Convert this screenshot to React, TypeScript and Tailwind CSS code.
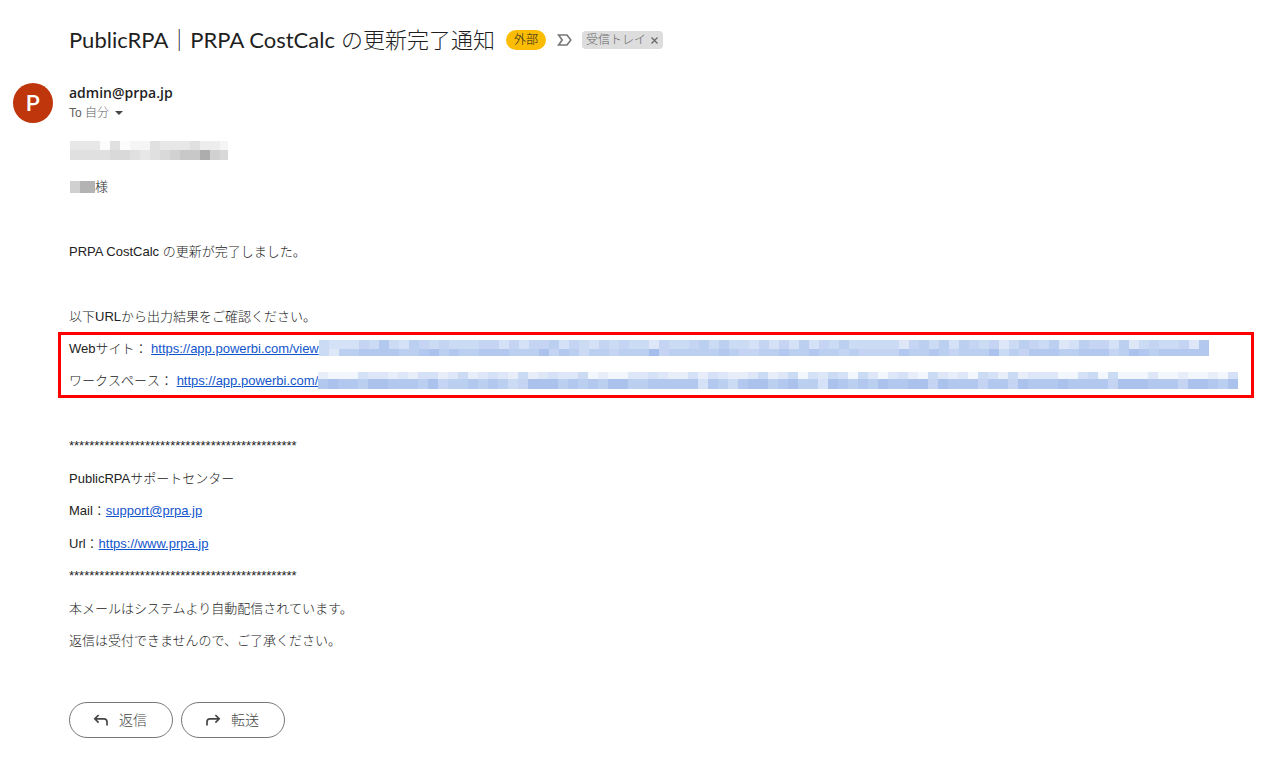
import React from "react"

type MosaicProps = {
  rows: string[]
  heights: number[]
  width: number
  palette: string[]
  label: string
}

const BLUES = ["#f2f6fd", "#e7eefa", "#dde7f8", "#d5e1f6", "#ccdbf4", "#c4d4f2", "#bbcff0", "#b3c8ef", "#abc2ed", "#a6beeb"]
const GRAYS = ["#fcfcfc", "#f5f5f5", "#ededed", "#e7e7e7", "#e0e0e0", "#d9d9d9", "#d1d1d1", "#c8c8c8", "#b4b4b4", "#adadad"]

const CELL = 10

// Pixelated strip, one digit per cell (index into the palette)
const Mosaic = ({ rows, heights, width, palette, label }: MosaicProps) => {
  const height = heights[0] + heights[1]
  return (
    <svg
      width={width}
      height={height}
      viewBox={`0 0 ${width} ${height}`}
      shapeRendering="crispEdges"
      className="shrink-0"
      role="img"
      aria-label={label}
    >
      {rows.map((row, r) =>
        row
          .split("")
          .map((cell, i) => (
            <rect
              key={`${r}-${i}`}
              x={i * CELL}
              y={r === 0 ? 0 : heights[0]}
              width={CELL}
              height={heights[r]}
              fill={palette[Number(cell)]}
            />
          ))
      )}
    </svg>
  )
}

const siteRows = [
  "43335474365454445535355635435454425445646443535363546444442564636545246546236553624544527",
  "42667777667867667776668576466566695666667655667667665655557667656668465777667775687677777",
]

const workspaceRows = [
  "10003221213312412321412322401002232113132112412403243042023104212043141222003404000200100103",
  "78776887776856676764588867676886677777376478867866387676877885877757758777877775888777588768",
]

const linkClass = "text-[#1155cc] underline"
const STARS = "*".repeat(45)

const Title = () => (
  <header className="flex items-center pl-[69px] pr-4 pt-6">
    <h1 className="font-['Lato','Noto_Sans_CJK_JP',sans-serif] text-[22px] leading-8 font-light text-[#1f1f1f]">
      <span className="font-normal">PublicRPA</span>｜<span className="font-normal">PRPA CostCalc</span> の更新完了通知
    </h1>
    <span className="ml-[11px] shrink-0 rounded-full bg-[#fbbc04] px-2 text-xs leading-5 text-[#202124]">外部</span>
    <button type="button" aria-label="重要マーク" className="ml-[11px] shrink-0">
      <svg width="15" height="12" viewBox="0 0 15 12" fill="none" stroke="#747775" strokeWidth="1.6">
        <path d="M1.6 1H10l3.8 5L10 11H1.6L5.2 6z" />
      </svg>
    </button>
    <span className="ml-[10px] flex h-[18px] shrink-0 items-center rounded bg-[#ddd] px-1 text-xs text-[#666]">
      受信トレイ
      <button type="button" aria-label="ラベルを削除" className="ml-1 flex w-[9px] justify-center">
        <svg width="7" height="7" viewBox="0 0 7 7" stroke="#666" strokeWidth="1.2">
          <path d="M.5.5l6 6M6.5.5l-6 6" />
        </svg>
      </button>
    </span>
  </header>
)

const Sender = () => (
  <div className="mt-[27px] flex items-start gap-4 pl-[13px]">
    <div className="flex size-10 shrink-0 items-center justify-center rounded-full bg-[#bf360c] font-[Roboto,sans-serif] text-[22px] font-medium text-white">
      P
    </div>
    <div>
      <div className="font-['Open_Sans',sans-serif] text-sm leading-5 font-semibold text-[#1f1f1f]">admin@prpa.jp</div>
      <button type="button" className="flex items-center text-xs leading-5 text-[#5e5e5e]">
        To 自分
        <svg width="8" height="4" viewBox="0 0 8 4" className="ml-[6px]" fill="#444746">
          <path d="M0 0h8L4 4z" />
        </svg>
      </button>
    </div>
  </div>
)

const Body = () => (
  <div className="mt-[18px] ml-[58px] mr-[29px] flex flex-col gap-[13px] text-[13px] leading-normal text-[#222]">
    <div className="h-[23px] pl-3">
      <Mosaic rows={["3330401143334221", "4444554345677965"]} heights={[9, 10]} width={158} palette={GRAYS} label="会社名" />
    </div>
    <p className="flex items-center pl-3">
      <svg width="25" height="12" viewBox="0 0 25 12" shapeRendering="crispEdges" role="img" aria-label="氏名">
        <path fill="#d0d0d0" d="M0 0h10v12H0z" />
        <path fill="#b3b3b3" d="M10 0h15v12H10z" />
      </svg>
      様
    </p>
    <p>&nbsp;</p>
    <p className="px-[11px]">PRPA CostCalc の更新が完了しました。</p>
    <p>&nbsp;</p>
    <p className="px-[11px]">以下URLから出力結果をご確認ください。</p>

    <div className="-mt-2 -mb-[7px] flex flex-col gap-[13px] overflow-hidden border-3 border-[#ff0000] px-2 py-1 whitespace-nowrap">
      <p className="flex items-center">
        <span>Webサイト：&nbsp;</span>
        <a href="https://app.powerbi.com/view" className={linkClass}>
          https://app.powerbi.com/view
        </a>
        <Mosaic rows={siteRows} heights={[9, 7]} width={890} palette={BLUES} label="URLの続き" />
      </p>
      <p className="flex items-center">
        <span className="[font-kerning:none]">ワークスペース：&nbsp;</span>
        <a href="https://app.powerbi.com/" className={linkClass}>
          https://app.powerbi.com/
        </a>
        <Mosaic rows={workspaceRows} heights={[7, 10]} width={920} palette={BLUES} label="URLの続き" />
      </p>
    </div>

    <p>&nbsp;</p>
    <p className="px-[11px]">{STARS}</p>
    <p className="px-[11px]">PublicRPAサポートセンター</p>
    <p className="px-[11px]">
      Mail：
      <a href="mailto:support@prpa.jp" className={linkClass}>
        support@prpa.jp
      </a>
    </p>
    <p className="px-[11px]">
      Url：
      <a href="https://www.prpa.jp" className={linkClass}>
        https://www.prpa.jp
      </a>
    </p>
    <p className="px-[11px]">{STARS}</p>
    <p className="px-[11px]">本メールはシステムより自動配信されています。</p>
    <p className="px-[11px]">返信は受付できませんので、ご了承ください。</p>
  </div>
)

const actionClass =
  "flex h-9 w-[104px] items-center justify-center gap-[10px] rounded-full border border-[#747775] pr-[2px] text-sm text-[#444746]"

const Actions = () => (
  <div className="mt-[51px] flex gap-2 pb-8 pl-[69px]">
    <button type="button" className={actionClass}>
      <svg width="16" height="12" viewBox="0 0 16 12" fill="none" stroke="#444746" strokeWidth="1.7">
        <path d="M5.6 1L1.8 4.8l3.8 3.8M2 4.8h9a3 3 0 0 1 3 3V11.5" />
      </svg>
      返信
    </button>
    <button type="button" className={actionClass}>
      <svg width="16" height="12" viewBox="0 0 16 12" fill="none" stroke="#444746" strokeWidth="1.7">
        <path d="M10.4 1l3.8 3.8-3.8 3.8M14 4.8H5a3 3 0 0 0-3 3V11.5" />
      </svg>
      転送
    </button>
  </div>
)

const App = () => {
  return (
    <main className="min-h-screen bg-white font-['Liberation_Sans','Noto_Sans_CJK_JP',sans-serif] font-light">
      <Title />
      <Sender />
      <Body />
      <Actions />
    </main>
  )
}

export default App
